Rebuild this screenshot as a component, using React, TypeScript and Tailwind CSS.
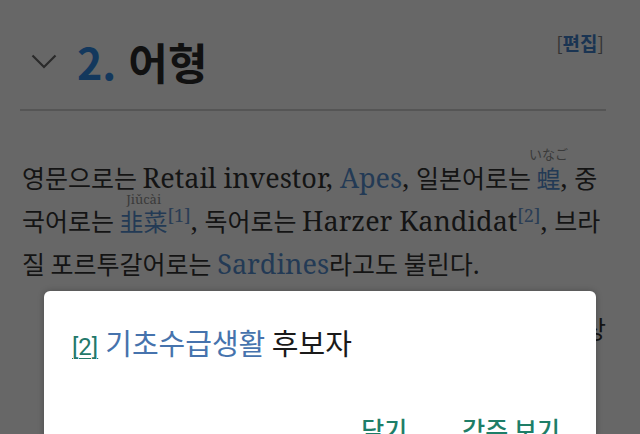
const serif = "font-['Noto_Serif','DejaVu_Serif','Noto_Sans_CJK_KR',serif]";
const ko = "font-['Noto_Sans_CJK_KR',sans-serif] text-[25px]";
const link = "text-[#233a55]";

function Ruby({ base, top, shift }: { base: string; top: string; shift: string }) {
  return (
    <span className={`relative text-[24px] font-['Noto_Sans_CJK_SC',sans-serif] ${link}`}>
      {base}
      <span
        className={`absolute left-1/2 -translate-x-1/2 ${shift} whitespace-nowrap text-[13px] leading-none font-['Noto_Serif','Noto_Sans_CJK_JP',serif] text-[#3a3a3a]`}
      >
        {top}
      </span>
    </span>
  );
}

function Ref({ n }: { n: number }) {
  return <sup className="text-[18px] text-[#2a3d55] top-[-0.5em]">[{n}]</sup>;
}

export default function App() {
  return (
    <div className="relative w-[640px] h-[434px] overflow-hidden bg-[#676767] font-['Noto_Sans_CJK_KR',sans-serif]">
      <div className="pl-[20px] pr-[34px]">
        <div className="relative h-[111px] border-b-2 border-[#555555]">
          <div className="flex items-center pt-[40px]">
            <svg width="26" height="15" viewBox="0 0 26 15" className="ml-[11px]">
              <polyline points="1.5,1.5 13,13 24.5,1.5" fill="none" stroke="#2a2a2a" strokeWidth="2.2" />
            </svg>
            <h2 className="ml-[20px] text-[43px] font-bold leading-none text-[#111]">
              <span className="text-[#13385d] mr-[12px]">2.</span>어형
            </h2>
          </div>
          <a className="absolute right-[2px] top-[29px] text-[19px] font-bold text-[#1a3452]">
            <span className="font-normal text-[#333]">[</span>편집<span className="font-normal text-[#333]">]</span>
          </a>
        </div>
        <p className={`mt-[45px] pl-[2px] text-[27px] leading-[42px] text-[#141414] ${serif}`}>
          <span className={ko}>영문으로는 </span>Retail investor, <span className={link}>Apes</span>,{" "}
          <span className={ko}>일본어로는 </span>
          <Ruby base="蝗" top="いなご" shift="-top-[12px]" />, <span className={ko}>중</span>
          <br />
          <span className={ko}>국어로는 </span>
          <Ruby base="韭菜" top="Jiǔcài" shift="-top-[10px]" />
          <Ref n={1} />, <span className={ko}>독어로는 </span>Harzer Kandidat
          <Ref n={2} />, <span className={ko}>브라</span>
          <br />
          <span className={ko}>질 포르투갈어로는 </span>
          <span className={link}>Sardines</span>
          <span className={ko}>라고도 불린다.</span>
        </p>
        <p className="mt-[22px] text-right whitespace-nowrap text-[25px] leading-[42px] text-[#141414]">
          주식 시장에서 개인 투자자를 낮잡아 부르는 말로 상
        </p>
      </div>

      <div className="absolute left-[44px] top-[291px] w-[552px] h-[200px] rounded-[6px] bg-white shadow-[0_0_6px_rgba(0,0,0,0.25)]">
        <div className="flex items-baseline gap-[7px] pl-[28px] pt-[33px] text-[29px] leading-[36px]">
          <span className="text-[24px] font-['Roboto',sans-serif] text-[#23786a] underline underline-offset-[3px] decoration-1">
            [2]
          </span>
          <span className="text-[#4673ad]">
            기초수급생활 <span className="text-[#1a1a1a]">후보자</span>
          </span>
        </div>
        <div className="flex justify-end gap-[55px] pr-[36px] pt-[46px] text-[25px] font-medium text-[#1e7e68]">
          <span>닫기</span>
          <span>각주 보기</span>
        </div>
      </div>
    </div>
  );
}
